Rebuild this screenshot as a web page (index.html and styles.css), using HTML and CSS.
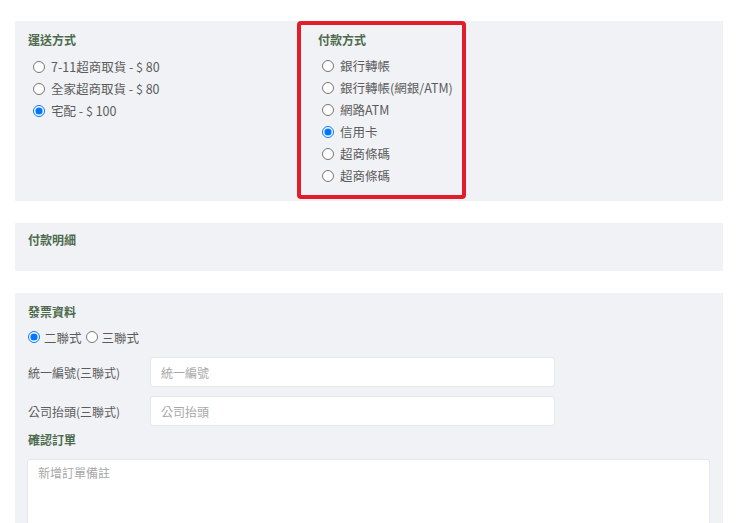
FILE: index.html
```html
<!DOCTYPE html>
<html lang="zh-Hant">
<head>
<meta charset="utf-8">
<title>結帳</title>
<link rel="stylesheet" href="styles.css">
</head>
<body>
<div class="page">
  <section class="panel panel-methods">
    <div class="col col-ship">
      <div class="title">運送方式</div>
      <label class="opt"><input type="radio" name="ship"> 7-11超商取貨 - $ 80</label>
      <label class="opt"><input type="radio" name="ship"> 全家超商取貨 - $ 80</label>
      <label class="opt"><input type="radio" name="ship" checked> 宅配 - $ 100</label>
    </div>
    <div class="col col-pay">
      <div class="title">付款方式</div>
      <label class="opt"><input type="radio" name="pay"> 銀行轉帳</label>
      <label class="opt"><input type="radio" name="pay"> 銀行轉帳(網銀/ATM)</label>
      <label class="opt"><input type="radio" name="pay"> 網路ATM</label>
      <label class="opt"><input type="radio" name="pay" checked> 信用卡</label>
      <label class="opt"><input type="radio" name="pay"> 超商條碼</label>
      <label class="opt"><input type="radio" name="pay"> 超商條碼</label>
    </div>
  </section>

  <section class="panel panel-detail">
    <div class="title">付款明細</div>
  </section>

  <section class="panel panel-invoice">
    <div class="title">發票資料</div>
    <div class="inv-type">
      <label class="inv-opt"><input type="radio" name="inv" checked> 二聯式</label>
      <label class="inv-opt"><input type="radio" name="inv"> 三聯式</label>
    </div>
    <div class="field">
      <span class="field-label">統一編號(三聯式)</span>
      <input class="field-input" type="text" placeholder="統一編號">
    </div>
    <div class="field">
      <span class="field-label">公司抬頭(三聯式)</span>
      <input class="field-input" type="text" placeholder="公司抬頭">
    </div>
    <div class="title title-confirm">確認訂單</div>
    <textarea class="note" placeholder="新增訂單備註"></textarea>
  </section>
</div>
</body>
</html>
```

FILE: styles.css
```css
* { box-sizing: border-box; }

html, body {
  margin: 0;
  padding: 0;
  background: #ffffff;
}

body {
  font-family: "Noto Sans CJK TC", "Noto Sans", "Liberation Sans", sans-serif;
  font-size: 12.5px;
  color: #5c5c5c;
  overflow: hidden;
}

.page {
  padding: 21px 17px 0 15px;
  display: flex;
  flex-direction: column;
  gap: 22px;
}

.panel {
  background: #f1f2f5;
}

.title {
  font-size: 12px;
  line-height: 18px;
  font-weight: 700;
  color: #4d6b4d;
}

.panel-methods {
  display: flex;
  align-items: flex-start;
  padding-bottom: 2px;
}

.col-ship {
  width: 282px;
  padding: 10px 13px 0 13px;
}

.col-pay {
  width: 169px;
  border: 4px solid #e31c2a;
  border-radius: 4px;
  padding: 6px 10px 8px 17px;
}

.col .title {
  margin-bottom: 7px;
}

.col-pay .title {
  margin-bottom: 6px;
}

.opt {
  display: flex;
  align-items: center;
  height: 22px;
  line-height: 22px;
  white-space: nowrap;
}

.opt input {
  width: 12px;
  height: 12px;
  margin: 0 6px 0 5px;
  flex: none;
}

.col-pay .opt input {
  margin-left: 4px;
}

.panel-detail {
  padding: 8px 13px 22px 13px;
}

.panel-invoice {
  padding: 10px 13px 0 13px;
  height: 230px;
  overflow: hidden;
}

.inv-type {
  display: flex;
  align-items: center;
  height: 22px;
  margin-top: 5px;
}

.inv-opt {
  display: flex;
  align-items: center;
  margin-right: 4px;
}

.inv-opt input {
  width: 12px;
  height: 12px;
  margin: 0 4px 0 0;
}

.field {
  display: flex;
  align-items: center;
  margin-top: 9px;
}

.field-label {
  width: 122px;
  flex: none;
  font-size: 12px;
}

.field-input {
  width: 405px;
  height: 30px;
  border: 1px solid #e6e7ea;
  border-radius: 3px;
  background: #fff;
  padding: 0 10px;
  font-family: inherit;
  font-size: 12px;
  color: #555;
  outline: none;
}

.field-input::placeholder,
.note::placeholder {
  color: #a8a8a8;
}

.title-confirm {
  margin-top: 5px;
}

.note {
  display: block;
  width: 683px;
  height: 100px;
  margin-top: 10px;
  margin-left: -1px;
  border: 1px solid #e6e7ea;
  border-radius: 3px;
  background: #fff;
  padding: 4px 10px;
  font-family: inherit;
  font-size: 12px;
  resize: none;
  outline: none;
}
```
